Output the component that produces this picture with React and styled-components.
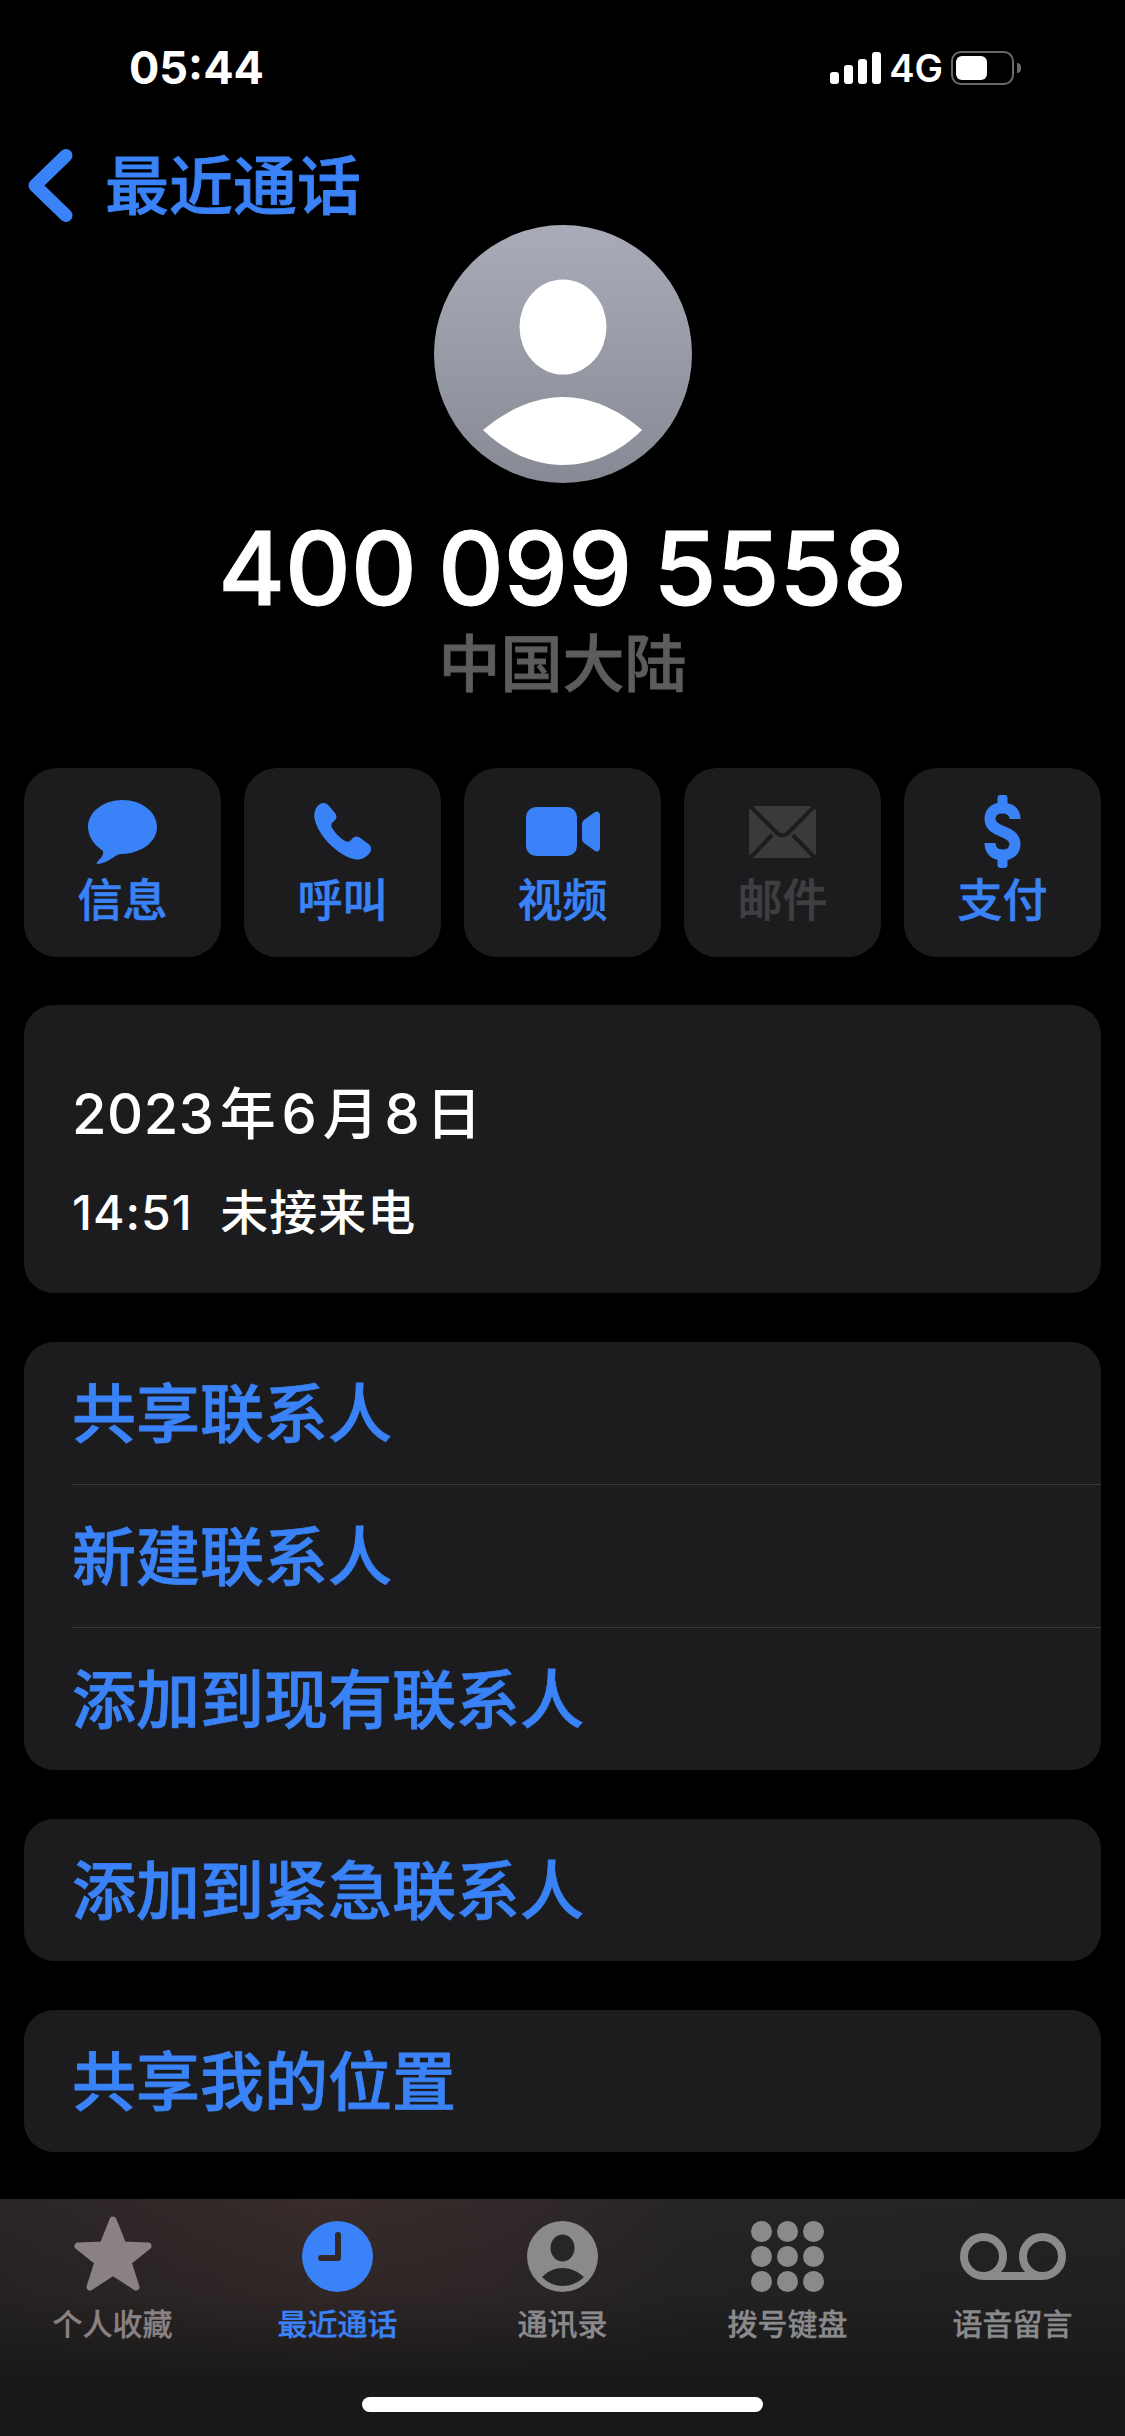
import styled, { createGlobalStyle } from "styled-components";

const BLUE = "#3a82f7";
const FONT = `Inter, "Noto Sans CJK SC", sans-serif`;

const GlobalStyle = createGlobalStyle`
  html, body {
    margin: 0;
    padding: 0;
    background: #000;
  }
  * {
    box-sizing: border-box;
  }
`;

const Page = styled.div`
  width: 1125px;
  height: 2436px;
  display: flex;
  flex-direction: column;
  overflow: hidden;
  background: #000;
  font-family: ${FONT};
`;

const StatusBar = styled.div`
  height: 149px;
  padding: 51px 104px 0 129px;
  display: flex;
  justify-content: space-between;
  align-items: flex-start;
  color: #fff;
`;

const Time = styled.span`
  font-size: 45px;
  font-weight: 700;
  line-height: 34px;
`;

const StatusRight = styled.div`
  display: flex;
  align-items: center;
  height: 34px;
`;

const Signal = styled.div`
  display: flex;
  align-items: flex-end;
  gap: 5px;
  height: 32px;
`;

const SignalBar = styled.span`
  width: 9px;
  height: ${(p) => p.$h}px;
  border-radius: 3px;
  background: #fff;
`;

const Network = styled.span`
  margin-left: 8px;
  font-size: 38px;
  font-weight: 600;
  line-height: 34px;
`;

const Battery = styled.div`
  margin-left: 8px;
  width: 63px;
  height: 34px;
  padding: 3px;
  border: 2px solid #6a6a6c;
  border-radius: 10px;
`;

const BatteryFill = styled.div`
  width: 31px;
  height: 24px;
  border-radius: 6px;
  background: #fff;
`;

const BatteryNub = styled.span`
  margin-left: 3px;
  width: 4px;
  height: 10px;
  border-radius: 0 4px 4px 0;
  background: #6a6a6c;
`;

const NavRow = styled.div`
  height: 76px;
  padding-left: 28px;
  display: flex;
  align-items: flex-start;
  gap: 32px;
`;

const BackTitle = styled.span`
  color: ${BLUE};
  font-size: 64px;
  font-weight: 500;
  line-height: 73px;
  -webkit-text-stroke: 0.8px ${BLUE};
`;

const Header = styled.div`
  display: flex;
  flex-direction: column;
  align-items: center;
`;

const Avatar = styled.svg`
  width: 258px;
  height: 258px;
  display: block;
`;

const PhoneNumber = styled.div`
  margin-top: 30px;
  color: #fff;
  font-size: 102px;
  font-weight: 500;
  line-height: 110px;
  word-spacing: -6px;
  -webkit-text-stroke: 1px #fff;
`;

const Region = styled.div`
  margin-top: 7px;
  color: #5c5c5e;
  font-size: 62px;
  font-weight: 500;
  line-height: 70px;
  -webkit-text-stroke: 0.8px #5c5c5e;
`;

const Content = styled.div`
  padding: 0 24px;
  display: flex;
  flex-direction: column;
  gap: 49px;
`;

const Actions = styled.div`
  margin-top: 68px;
  padding: 0 24px;
  display: grid;
  grid-template-columns: repeat(5, 197px);
  justify-content: space-between;
  margin-bottom: 48px;
`;

const ActionButton = styled.div`
  height: 189px;
  padding-top: 27px;
  display: flex;
  flex-direction: column;
  align-items: center;
  border-radius: 33px;
  background: #1c1c1e;
  color: ${(p) => (p.$disabled ? "#3f3f41" : BLUE)};
`;

const ActionIcon = styled.div`
  height: 73px;
  display: flex;
  align-items: center;
  justify-content: center;
`;

const ActionLabel = styled.span`
  margin-top: 8px;
  font-size: 45px;
  font-weight: 500;
  line-height: 50px;
  -webkit-text-stroke: 0.6px currentColor;
`;

const Card = styled.div`
  border-radius: 30px;
  background: #1c1c1e;
  overflow: hidden;
`;

const InfoCard = styled(Card)`
  height: 288px;
  padding: 78px 48px 0;
  color: #fff;
`;

const InfoDate = styled.div`
  font-size: 56px;
  font-weight: 500;
  line-height: 62px;
  letter-spacing: 0.5px;
`;

const InfoCall = styled.div`
  margin-top: 40px;
  font-size: 48px;
  font-weight: 500;
  line-height: 56px;
  letter-spacing: 1px;
  white-space: pre;
`;

const Row = styled.div`
  height: 142px;
  margin-left: 48px;
  padding-bottom: 8px;
  display: flex;
  align-items: center;
  color: ${BLUE};
  font-size: 64px;
  font-weight: 500;
  -webkit-text-stroke: 0.8px ${BLUE};

  & + & {
    height: 143px;
    border-top: 1px solid #38383a;
  }
`;

const TabBar = styled.div`
  margin-top: auto;
  height: 237px;
  padding-top: 22px;
  display: flex;
  flex-direction: column;
  align-items: center;
  background:
    linear-gradient(180deg, rgba(24, 24, 24, 0) 0%, rgba(24, 24, 24, 0.25) 40%, #181818 78%),
    linear-gradient(90deg, #2a2526 0%, #382b2b 28%, #33292a 44%, #252426 62%, #232325 100%);
`;

const Tabs = styled.div`
  width: 100%;
  display: grid;
  grid-template-columns: repeat(5, 225px);
`;

const Tab = styled.div`
  display: flex;
  flex-direction: column;
  align-items: center;
  color: ${(p) => (p.$active ? BLUE : p.$warm ? "#8a8282" : "#8a8a8c")};
`;

const TabIcon = styled.div`
  height: 71px;
  display: flex;
  align-items: center;
  justify-content: center;
`;

const StarIcon = styled.svg`
  margin-bottom: 6px;
`;

const TabLabel = styled.span`
  margin-top: 12px;
  font-size: 30px;
  font-weight: 500;
  line-height: 40px;
  -webkit-text-stroke: 0.3px currentColor;
`;

const HomeIndicator = styled.div`
  margin-top: 53px;
  width: 401px;
  height: 15px;
  border-radius: 8px;
  background: #fff;
`;

const MessageIcon = () => (
  <svg width="69" height="64" viewBox="0 0 69 64" fill="currentColor">
    <path d="M34.5 0C53.6 0 69 12 69 27C69 42 53.6 53 34.5 54C32 54 30 54.5 29 55C22 60 15 64 9 64C8 64 9 62 10 61C13 58 16 55 15 51C6 45 0 36 0 27C0 12 15.4 0 34.5 0Z" />
  </svg>
);

const PhoneIcon = () => (
  <svg width="57" height="57" viewBox="0 0 57 57" fill="currentColor">
    <path d="M7 .5C10-.5 13 .5 15 3L21 10C23 12.5 23 15 21 17L18.5 19.5C17 21 17 23 18 25C21 30 26 35 31 38C33 39 35 39 36.5 37.5L39 35C41 33 44 33 46.5 35L55 41.5C57.5 43.5 57.5 47 56 49.5C53 54 48 57 42 56.5C25 54 3 32 .5 15C-.5 9 2 3 7 .5Z" />
  </svg>
);

const VideoIcon = () => (
  <svg width="74" height="49" viewBox="0 0 74 49" fill="currentColor">
    <rect x="0" y="0" width="51" height="49" rx="10" />
    <path d="M56 17C56 15 57 14 58 13L69 5C71 3.5 74 5 74 8V41C74 44 71 45.5 69 44L58 36C57 35 56 34 56 32Z" />
  </svg>
);

const MailIcon = () => (
  <svg width="67" height="52" viewBox="0 0 67 52">
    <rect width="67" height="52" rx="5" fill="#3a3a3c" />
    <path
      d="M1 0L28 27C31 30 36 30 39 27L66 0M1 52L23 29M66 52L44 29"
      fill="none"
      stroke="#1c1c1e"
      strokeWidth="4"
    />
  </svg>
);

// the pay button's symbol, an icon in the reference rather than a label
const PayIcon = () => (
  <svg width="37" height="73" viewBox="0 0 37 73" fill="none">
    <path
      d="M31 24C31 16 25 13 18 13C10 13 6 18 6 24C6 31 12 34 18.5 36.5C25 39 31 42 31 49C31 56 26 60 18.5 60C11 60 6 56 6 48"
      stroke="currentColor"
      strokeWidth="11"
    />
    <rect x="13.5" y="0" width="10" height="12" rx="3" fill="currentColor" />
    <rect x="13.5" y="61" width="10" height="12" rx="3" fill="currentColor" />
  </svg>
);

const ChevronIcon = () => (
  <svg width="45" height="73" viewBox="0 0 45 73" fill="none">
    <path d="M38 6.5L7 36.5L38 66.5" stroke={BLUE} strokeWidth="13" strokeLinecap="round" strokeLinejoin="round" />
  </svg>
);

const ClockIcon = () => (
  <svg width="71" height="71" viewBox="0 0 71 71">
    <circle cx="35.5" cy="35.5" r="35.5" fill="currentColor" />
    <path d="M36 14V37H19" fill="none" stroke="#33292a" strokeWidth="6" strokeLinecap="round" strokeLinejoin="round" />
  </svg>
);

const ContactIcon = () => (
  <svg width="71" height="71" viewBox="0 0 71 71">
    <circle cx="35.5" cy="35.5" r="35.5" fill="currentColor" />
    <ellipse cx="35.5" cy="27" rx="12" ry="13.5" fill="#272526" />
    <path d="M15 56C21 50 28 47 35.5 47C43 47 50 50 57 56C51 62 43 65 35.5 65C28 65 21 62 15 56Z" fill="#272526" />
  </svg>
);

const KeypadIcon = () => (
  <svg width="73" height="71" viewBox="0 0 73 71" fill="currentColor">
    {[0, 1, 2].map((row) =>
      [0, 1, 2].map((col) => (
        <circle key={`${row}-${col}`} cx={10.5 + col * 26} cy={10.5 + row * 25} r="10.5" />
      ))
    )}
  </svg>
);

const VoicemailIcon = () => (
  <svg width="106" height="47" viewBox="0 0 106 47">
    <circle cx="23.5" cy="23.5" r="19.5" fill="none" stroke="currentColor" strokeWidth="8" />
    <circle cx="82.5" cy="23.5" r="19.5" fill="none" stroke="currentColor" strokeWidth="8" />
    <rect x="23.5" y="39" width="59" height="8" fill="currentColor" />
  </svg>
);

const actions = [
  { label: "信息", icon: <MessageIcon /> },
  { label: "呼叫", icon: <PhoneIcon /> },
  { label: "视频", icon: <VideoIcon /> },
  { label: "邮件", icon: <MailIcon />, disabled: true },
  { label: "支付", icon: <PayIcon /> },
];

const tabs = [
  {
    label: "个人收藏",
    warm: true,
    icon: (
      <StarIcon width="78" height="75" viewBox="0 0 78 75">
        <polygon
          points="39,4 49,29 74,30 54,46 62,71 39,56 16,71 24,46 4,30 29,29"
          fill="currentColor"
          stroke="currentColor"
          strokeWidth="7"
          strokeLinejoin="round"
        />
      </StarIcon>
    ),
  },
  { label: "最近通话", active: true, icon: <ClockIcon /> },
  { label: "通讯录", icon: <ContactIcon /> },
  { label: "拨号键盘", icon: <KeypadIcon /> },
  { label: "语音留言", icon: <VoicemailIcon /> },
];

const App = () => {
  return (
    <Page>
      <GlobalStyle />
      <StatusBar>
        <Time>05:44</Time>
        <StatusRight>
          <Signal>
            <SignalBar $h={12} />
            <SignalBar $h={19} />
            <SignalBar $h={25} />
            <SignalBar $h={32} />
          </Signal>
          <Network>4G</Network>
          <Battery>
            <BatteryFill />
          </Battery>
          <BatteryNub />
        </StatusRight>
      </StatusBar>
      <NavRow>
        <ChevronIcon />
        <BackTitle>最近通话</BackTitle>
      </NavRow>
      <Header>
        <Avatar viewBox="0 0 258 258">
          <defs>
            <linearGradient id="avatarFill" x1="0" y1="0" x2="0" y2="1">
              <stop offset="0" stopColor="#a9acb8" />
              <stop offset="1" stopColor="#868a94" />
            </linearGradient>
          </defs>
          <circle cx="129" cy="129" r="129" fill="url(#avatarFill)" />
          <ellipse cx="129" cy="102" rx="43.5" ry="47.5" fill="#fff" />
          <path d="M49 205C75 183 103 172 129 172C155 172 183 183 208 205C185 228 157 240 129 240C101 240 73 228 49 205Z" fill="#fff" />
        </Avatar>
        <PhoneNumber>400 099 5558</PhoneNumber>
        <Region>中国大陆</Region>
      </Header>
      <Actions>
        {actions.map((a) => (
          <ActionButton key={a.label} $disabled={a.disabled}>
            <ActionIcon>{a.icon}</ActionIcon>
            <ActionLabel>{a.label}</ActionLabel>
          </ActionButton>
        ))}
      </Actions>
      <Content>
        <InfoCard>
          <InfoDate>2023{"\u200A"}年{"\u200A"}6{"\u200A"}月{"\u200A"}8{"\u200A"}日</InfoDate>
          <InfoCall>14:51  未接来电</InfoCall>
        </InfoCard>
        <Card>
          <Row>共享联系人</Row>
          <Row>新建联系人</Row>
          <Row>添加到现有联系人</Row>
        </Card>
        <Card>
          <Row>添加到紧急联系人</Row>
        </Card>
        <Card>
          <Row>共享我的位置</Row>
        </Card>
      </Content>
      <TabBar>
        <Tabs>
          {tabs.map((t) => (
            <Tab key={t.label} $active={t.active} $warm={t.warm}>
              <TabIcon>{t.icon}</TabIcon>
              <TabLabel>{t.label}</TabLabel>
            </Tab>
          ))}
        </Tabs>
        <HomeIndicator />
      </TabBar>
    </Page>
  );
};

export default App;
